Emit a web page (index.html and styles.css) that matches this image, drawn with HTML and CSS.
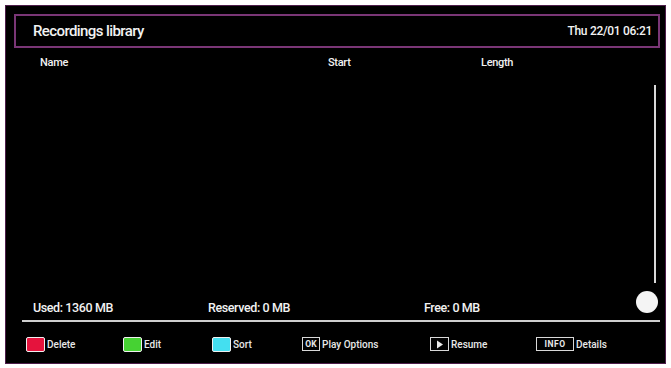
FILE: index.html
```html
<!DOCTYPE html>
<html>
<head>
<meta charset="utf-8">
<link rel="stylesheet" href="styles.css">
</head>
<body>
<div class="screen">
  <div class="header">
    <span class="title">Recordings library</span>
    <span class="clock">Thu 22/01 06:21</span>
  </div>
  <div class="cols">
    <span class="c-name">Name</span>
    <span class="c-start">Start</span>
    <span class="c-len">Length</span>
  </div>
  <div class="body">
    <div class="list"></div>
    <div class="scroll"></div>
  </div>
  <div class="stats">
    <span>Used: 1360 MB</span>
    <span>Reserved: 0 MB</span>
    <span>Free: 0 MB</span>
    <span class="thumb"></span>
  </div>
  <div class="rule"></div>
  <div class="keys">
    <div class="key k1"><span class="swatch red"></span><span class="lbl">Delete</span></div>
    <div class="key k2"><span class="swatch green"></span><span class="lbl">Edit</span></div>
    <div class="key k3"><span class="swatch cyan"></span><span class="lbl">Sort</span></div>
    <div class="key k4"><span class="btn ok">OK</span><span class="lbl">Play Options</span></div>
    <div class="key k5"><span class="btn play"><svg width="8" height="9" viewBox="0 0 8 9"><polygon points="1,0.5 7,4.5 1,8.5" fill="#e8e8e8"/></svg></span><span class="lbl">Resume</span></div>
    <div class="key k6"><span class="btn info">INFO</span><span class="lbl">Details</span></div>
  </div>
</div>
</body>
</html>
```

FILE: styles.css
```css
html, body {
  margin: 0;
  padding: 0;
  background: #fff;
}
body {
  font-family: Roboto, "Liberation Sans", sans-serif;
  color: #f2f2f2;
}
.screen {
  margin: 5px 0 0 5px;
  width: 659px;
  height: 347px;
  padding-bottom: 10px;
  background: #000;
  border: 1px solid #4d1d4a;
  display: flex;
  flex-direction: column;
}
.header {
  margin: 8px 5px 0 8px;
  height: 30px;
  border: 2px solid #7a3676;
  display: flex;
  align-items: center;
  justify-content: space-between;
  padding: 0 6px 0 17px;
}
.title {
  font-size: 15px;
  font-weight: 500;
  letter-spacing: -0.6px;
}
.clock {
  font-size: 12px;
  font-weight: 500;
  letter-spacing: -0.3px;
}
.cols {
  display: grid;
  grid-template-columns: 288px 153px 1fr;
  padding-left: 34px;
  margin-top: 8px;
  font-size: 11px;
  font-weight: 500;
  letter-spacing: -0.3px;
  line-height: 14px;
}
.body {
  flex: 1;
  display: flex;
}
.list {
  flex: 1;
}
.scroll {
  width: 2px;
  background: #d8d8d8;
  margin: 15px 9px 13px 0;
}
.stats {
  display: grid;
  grid-template-columns: 175px 216px 212px 22px;
  grid-template-rows: 22px;
  padding-left: 27px;
  align-items: center;
  font-size: 12.5px;
  font-weight: 500;
  letter-spacing: -0.4px;
  height: 22px;
}
.thumb {
  width: 22px;
  height: 22px;
  margin-top: -10px;
  border-radius: 50%;
  background: #f4f4f4;
}
.rule {
  margin: 2px 5px 0 16px;
  height: 2px;
  background: #cfcfcf;
}
.keys {
  display: flex;
  align-items: center;
  height: 18px;
  margin-top: 13px;
  padding-left: 20px;
  font-size: 10px;
  font-weight: 500;
}
.key {
  display: flex;
  align-items: center;
  gap: 2px;
}
.k1 { width: 97px; }
.k2 { width: 89px; }
.k3 { width: 90px; }
.k4 { width: 128px; }
.k5 { width: 106px; }
.swatch {
  width: 17px;
  height: 13px;
  border: 1px solid #f0f0f0;
  border-radius: 2px;
}
.red { background: #e5133d; }
.green { background: #46d233; }
.cyan { background: #44dff0; }
.btn {
  border: 1.5px solid #d8d8d8;
  height: 12px;
  display: flex;
  align-items: center;
  justify-content: center;
  font-size: 8.5px;
  font-weight: bold;
  color: #e8e8e8;
  padding: 0 1px;
}
.ok { width: 14px; }
.play { width: 15px; }
.info { width: 34px; letter-spacing: 0.5px; }
.lbl {
  color: #e8e8e8;
}
```
